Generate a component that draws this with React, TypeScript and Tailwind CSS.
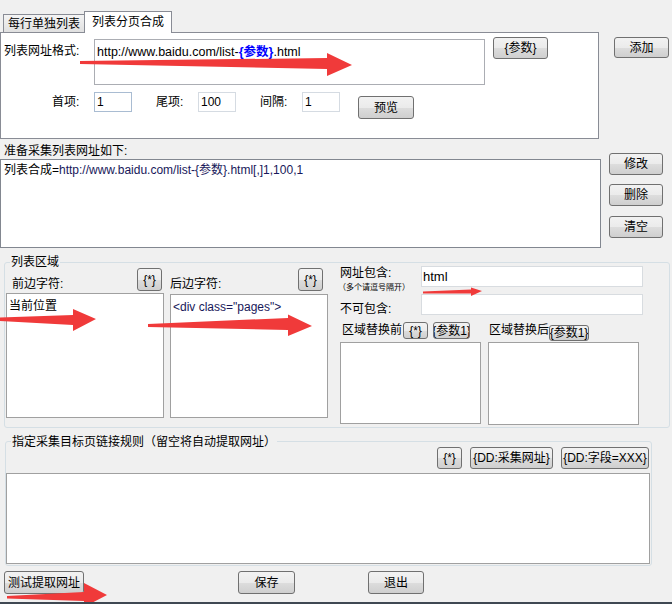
import type { ReactNode } from "react";

function Btn({ children, className = "" }: { children: ReactNode; className?: string }) {
  return (
    <div
      className={`flex shrink-0 items-center justify-center overflow-hidden whitespace-nowrap rounded-[3px] border border-[#707070] bg-[linear-gradient(#f2f2f2_0%,#ebebeb_50%,#dddddd_51%,#cfcfcf_100%)] text-[12px] leading-none text-black ${className}`}
    >
      {children}
    </div>
  );
}

function Arrows() {
  return (
    <svg className="pointer-events-none absolute inset-0" width="672" height="604" viewBox="0 0 672 604">
      <g fill="#f03a3a">
        <polygon points="80,61 327,58 327,53 352,65 327,76 327,69 80,64" />
        <polygon points="0,317.5 73,315 73,309 96,319 73,331 73,325 0,321" />
        <polygon points="148,324 288,318 288,314.5 312,326 288,336 288,330 148,327" />
        <polygon points="423,291.5 471,289.5 471,287.5 482,291 471,296 471,293.5 423,293.5" />
        <polygon points="7,596 84,592 84,583 107,595 93.6,602 84,602 84,601 7,598.5" />
      </g>
    </svg>
  );
}

export default function App() {
  return (
    <div className="relative h-[604px] w-[672px] overflow-hidden bg-[#f0f0f0] font-['Liberation_Sans','Noto_Sans_CJK_SC',sans-serif] text-[12px] leading-[14px] text-black">
      {/* tab page + 添加 */}
      <div className="flex h-[139px]">
        <div className="w-[599px] pt-[11px]">
          <div className="flex h-[22px] items-end">
            <div className="ml-[3px] flex h-[19px] w-[81px] items-center justify-center border border-r-0 border-[#898c95] bg-[linear-gradient(#f4f4f4,#e0e0e0)]">
              每行单独列表
            </div>
            <div className="relative z-10 flex h-[22px] w-[88px] items-center justify-center border border-b-0 border-[#898c95] bg-white pb-[1px]">
              列表分页合成
            </div>
          </div>
          <div className="-mt-px h-[107px] border border-[#898c95] bg-white">
            <div className="flex pt-[4px]">
              <div className="w-[93px] pl-[3px] pt-[7px]">列表网址格式:</div>
              <div className="mt-[2px] h-[46px] w-[391px] border border-[#abadb3] pl-[2px] pt-[5px] text-[12.5px]">
                http://www.baidu.com/list-<span className="font-bold text-[#0000ff]">{"{参数}"}</span>.html
              </div>
              <Btn className="ml-[8px] h-[22px] w-[55px]">{"{参数}"}</Btn>
            </div>
            <div className="mt-[7px] flex items-start pl-[51px]">
              <div className="flex h-[20px] w-[42px] items-center">首项:</div>
              <div className="flex h-[20px] w-[38px] items-center border border-[#a9bcd2] pl-[2px]">1</div>
              <div className="ml-[24px] flex h-[20px] w-[42px] items-center">尾项:</div>
              <div className="flex h-[20px] w-[38px] items-center border border-[#d5dbe2] pl-[2px]">100</div>
              <div className="ml-[24px] flex h-[20px] w-[42px] items-center">间隔:</div>
              <div className="flex h-[20px] w-[38px] items-center border border-[#d5dbe2] pl-[2px]">1</div>
              <Btn className="ml-[18px] mt-[4px] h-[23px] w-[56px]">预览</Btn>
            </div>
          </div>
        </div>
        <Btn className="ml-[15px] mt-[37px] h-[21px] w-[55px] border-[#3c8fc8] bg-[linear-gradient(#f0f6fa_0%,#e2edf4_50%,#cddfe9_51%,#c2d6e2_100%)]">
          添加
        </Btn>
      </div>

      {/* list preview */}
      <div className="flex h-[109px]">
        <div className="w-[601px]">
          <div className="h-[20px] pl-[4px] pt-[5px]">准备采集列表网址如下:</div>
          <div className="h-[89px] border border-[#828790] bg-white pl-[3px] pt-[3px]">
            列表合成=<span className="text-[#18185a]">http://www.baidu.com/list-{"{参数}"}.html[,]1,100,1</span>
          </div>
        </div>
        <div className="ml-[8px] flex flex-col pt-[14px]">
          <Btn className="h-[22px] w-[54px]">修改</Btn>
          <Btn className="mt-[9px] h-[22px] w-[54px]">删除</Btn>
          <Btn className="mt-[10px] h-[22px] w-[54px]">清空</Btn>
        </div>
      </div>

      {/* 列表区域 */}
      <div className="relative ml-[4px] mt-[14px] h-[166px] w-[666px] rounded-[3px] border border-[#d5dfe5]">
        <span className="absolute -top-[8px] left-[5px] bg-[#f0f0f0] px-px">列表区域</span>
        <div className="flex pt-[3px]">
          <div className="ml-px w-[158px]">
            <div className="mt-[2px] flex h-[23px] justify-between">
              <span className="pl-[6px] pt-[9px]">前边字符:</span>
              <Btn className="mr-[2px] h-[23px] w-[25px]">{"{*}"}</Btn>
            </div>
            <div className="mt-[2px] h-[125px] border border-[#a0a0a0] bg-white pl-[2px] pt-[5px]">当前位置</div>
          </div>
          <div className="ml-[6px] w-[158px]">
            <div className="mt-[2px] flex h-[23px] justify-between">
              <span className="pt-[9px]">后边字符:</span>
              <Btn className="mr-[5px] h-[23px] w-[25px]">{"{*}"}</Btn>
            </div>
            <div className="mt-[3px] h-[124px] border border-[#a0a0a0] bg-white pl-[2px] pt-[5px] text-[#18185a]">
              {'<div class="pages">'}
            </div>
          </div>
          <div className="ml-[12px] w-[303px]">
            <div className="flex h-[21px]">
              <div className="w-[81px]">
                <div>网址包含:</div>
                <div className="-ml-[2px] mt-[3px] whitespace-nowrap text-[8px] leading-[10px]">（多个请逗号隔开）</div>
              </div>
              <div className="flex h-[21px] w-[222px] items-center border border-[#d8dce0] bg-white pl-px text-[13px]">html</div>
            </div>
            <div className="mt-[7px] flex">
              <div className="w-[81px] pt-[8px]">不可包含:</div>
              <div className="h-[21px] w-[222px] border border-[#d8dce0] bg-white" />
            </div>
            <div className="mt-[5px] flex">
              <div className="w-[141px]">
                <div className="flex h-[21px] items-start">
                  <span className="ml-[2px] pt-[2px]">区域替换前</span>
                  <Btn className="ml-px mt-px h-[17px] w-[25px]">{"{*}"}</Btn>
                  <Btn className="ml-[5px] mt-px h-[17px] w-[37px]">{"{参数1}"}</Btn>
                </div>
                <div className="h-[82px] border border-[#a0a0a0] bg-white" />
              </div>
              <div className="ml-[7px] w-[151px]">
                <div className="flex h-[21px] items-start">
                  <span className="ml-px pt-[2px]">区域替换后</span>
                  <Btn className="mt-[4px] h-[16px] w-[40px]">{"{参数1}"}</Btn>
                </div>
                <div className="h-[83px] border border-[#a0a0a0] bg-white" />
              </div>
            </div>
          </div>
        </div>
      </div>

      {/* 指定采集目标页链接规则 */}
      <div className="relative ml-[5px] mt-[13px] h-[125px] w-[647px] rounded-[3px] border border-[#d5dfe5]">
        <span className="absolute -top-[7px] left-[5px] bg-[#f0f0f0] px-px">指定采集目标页链接规则（留空将自动提取网址）</span>
        <div className="flex justify-end gap-[8px] pr-[2px] pt-[5px]">
          <Btn className="h-[22px] w-[25px]">{"{*}"}</Btn>
          <Btn className="h-[22px] w-[83px]">{"{DD:采集网址}"}</Btn>
          <Btn className="h-[22px] w-[88px]">{"{DD:字段=XXX}"}</Btn>
        </div>
        <div className="mt-[4px] h-[91px] w-[644px] border border-[#a0a0a0] bg-white" />
      </div>

      {/* bottom buttons */}
      <div className="mt-[5px] flex">
        <Btn className="ml-[4px] h-[23px] w-[80px] border-[#505050]">测试提取网址</Btn>
        <Btn className="ml-[154px] h-[23px] w-[57px]">保存</Btn>
        <Btn className="ml-[73px] h-[23px] w-[56px]">退出</Btn>
      </div>
      <div className="mt-[8px] h-[2px] bg-[#3f4852]" />

      <Arrows />
    </div>
  );
}
